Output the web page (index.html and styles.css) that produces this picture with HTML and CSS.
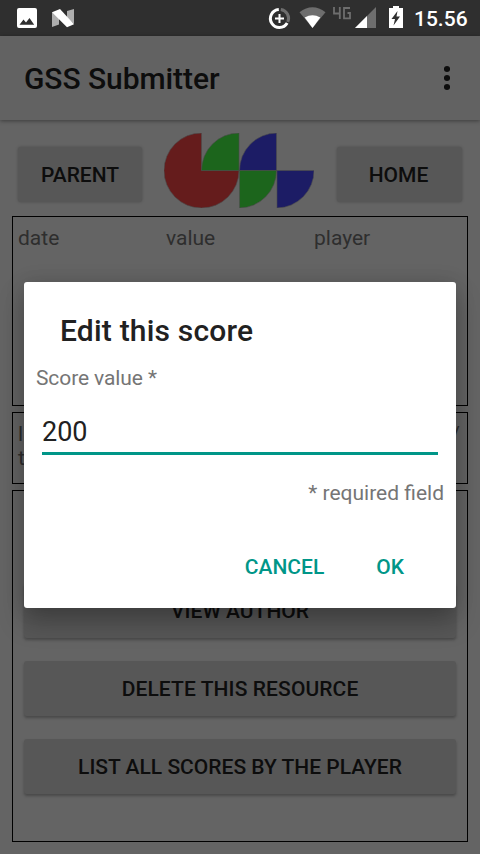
FILE: index.html
```html
<!DOCTYPE html>
<html lang="en">
<head>
<meta charset="utf-8">
<title>GSS Submitter</title>
<link rel="stylesheet" href="styles.css">
</head>
<body>
<div class="screen">
  <header class="status">
    <svg class="status-left" width="60" height="36" viewBox="0 0 60 36">
      <path fill="#fff" fill-rule="evenodd" d="M19 8h16q2 0 2 2v16q0 2-2 2H19q-2 0-2-2V10q0-2 2-2zM19.500 24.700h14.700l-4.700-6.700-3.500 4.500-2.500-3z"/>
    </svg>
    <svg class="nougat" width="24" height="36" viewBox="0 0 24 36">
      <path fill="#aeaeae" d="M0 12l7 5v7.500l-7 2.500zM15 11l7-2v15l-7-6z"/>
      <path fill="#fff" d="M0 12.300L8 9l14 15.300-7 3z"/>
    </svg>
    <svg class="status-right" width="150" height="36" viewBox="0 0 150 36">
      <path fill="none" stroke="#6e6e6e" stroke-width="3" d="M20.800 9.500a9 9 0 0 1 7 12.500"/>
      <path fill="none" stroke="#fff" stroke-width="3" d="M18.800 9.500A9 9 0 1 0 27.200 23"/>
      <path stroke="#fff" stroke-width="2" d="M15 18.500h9M19.500 14v9"/>
      <path fill="#6e6e6e" d="M52.500 28L39.500 12.200q13-10 26 0z"/>
      <path fill="#fff" d="M52.500 28l-7.800-10.500q7.800-4.500 15.600 0z"/>
      <path fill="none" stroke="#6e6e6e" stroke-width="1.800" d="M74 7v6.500h6.500M79.800 7v12M90 8h-6v10.300h6V13h-2.500"/>
      <path fill="#6e6e6e" d="M116 7v21H95z"/>
      <path fill="#fff" d="M107 16v12H95z"/>
      <path fill="#fff" fill-rule="evenodd" d="M133 6h6v2h4v20h-14V8h4zM137.500 11l-6 8h3.500l-1.500 6.500 6.500-9h-3.500z"/>
    </svg>
    <span class="clock">15.56</span>
  </header>
  <div class="appbar">
    <h1>GSS Submitter</h1>
    <svg width="6" height="26" viewBox="0 0 6 26" fill="#0d0d0d"><circle cx="3" cy="4" r="3.100"/><circle cx="3" cy="13" r="3.100"/><circle cx="3" cy="22" r="3.100"/></svg>
  </div>
  <main class="content">
    <div class="nav">
      <button class="btn small">PARENT</button>
      <svg class="logo" width="150" height="75" viewBox="0 0 150 75">
        <g stroke="#4b4b4b" stroke-width=".6">
        <path fill="#651c1c" d="M37.500 0A37.500 37.500 0 1 0 75 37.500H37.500z"/>
        <path fill="#1c651c" d="M37.500 37.500A37.500 37.500 0 0 1 75 0v37.500z"/>
        <path fill="#1c1c65" d="M75.500 37.500A37.500 37.500 0 0 1 112.500 0v37.500z"/>
        <path fill="#1c651c" d="M112.500 37.500A37.500 37.500 0 0 1 75.500 75V37.500z"/>
        <path fill="#1c1c65" d="M113 37.500h37A37.500 37.500 0 0 1 113 75z"/>
        </g>
      </svg>
      <button class="btn small home">HOME</button>
    </div>
    <section class="panel scores"><span>date</span><span>value</span><span>player</span></section>
    <section class="panel link"><div class="line"><span>l</span><span>/</span></div><div>t</div></section>
    <section class="panel actions">
      <button class="btn">VIEW AUTHOR</button>
      <button class="btn delete">DELETE THIS RESOURCE</button>
      <button class="btn">LIST ALL SCORES BY THE PLAYER</button>
    </section>
  </main>
  <div class="dialog">
    <h2>Edit this score</h2>
    <label class="label" for="score">Score value *</label>
    <input id="score" class="field" value="200">
    <p class="hint">* required field</p>
    <div class="buttons"><button class="flat">CANCEL</button><button class="flat">OK</button></div>
  </div>
</div>
</body>
</html>
```
FILE: styles.css
```css
* { box-sizing: border-box; }
body { margin: 0; font-family: Roboto, "Liberation Sans", sans-serif; }
.screen { position: relative; width: 480px; height: 854px; overflow: hidden; background: #646464; display: flex; flex-direction: column; }
svg { display: block; flex: none; }
h1, h2, p { margin: 0; }
button { font-family: inherit; border: 0; padding: 0; }

.status { height: 36px; flex: none; display: flex; background: #2f2f2f; }
.status-left { margin-right: -8px; }
.status-right { margin-left: 184px; }
.clock { margin-left: 4px; font-size: 21px; font-weight: 500; line-height: 38px; color: #fff; white-space: nowrap; }

.appbar { height: 84px; flex: none; display: flex; align-items: center; justify-content: space-between; padding: 0 30px 0 24px; background: #626262; box-shadow: 0 1px 4px rgba(0, 0, 0, .4); }
h1 { padding-top: 2px; font-size: 30px; font-weight: 500; color: #0d0d0d; line-height: 36px; letter-spacing: -.07px; }

.content { flex: 1; display: flex; flex-direction: column; padding: 0 12px 12px; }
.nav { height: 96px; flex: none; display: flex; align-items: flex-start; padding: 13px 6px 0 6px; }
.logo { margin: 0 23px 0 22px; }
.btn { height: 55px; flex: none; border-radius: 3px; background: #575757; color: #0d0d0d; font-size: 21px; font-weight: 500; box-shadow: 0 2px 3px rgba(0, 0, 0, .28); }
.small { width: 124px; margin-top: 14px; box-shadow: 0 0 3px rgba(0, 0, 0, .25); }
.home { width: 125px; padding-right: 2px; }
.delete { letter-spacing: .1px; }

.panel { border: 1px solid #000; color: #2e2e2e; font-size: 21px; line-height: 25px; }
.scores { height: 190px; display: grid; grid-template-columns: repeat(3, 148px); padding: 9px 5px; margin-bottom: 6px; align-content: start; }
.link { height: 72px; padding: 9px 7px 5px 5px; margin-bottom: 6px; line-height: 24px; }
.line { display: flex; justify-content: space-between; }
.actions { flex: 1; display: flex; flex-direction: column; gap: 23px; padding: 92px 11px 0; }

.dialog { position: absolute; left: 24px; top: 282px; width: 432px; height: 326px; border-radius: 3px; background: #fff; display: flex; flex-direction: column; padding: 31px 12px 0; box-shadow: 0 14px 26px rgba(0, 0, 0, .25), 0 0 20px rgba(0, 0, 0, .12); }
h2 { padding-left: 24px; font-size: 30px; line-height: 36px; font-weight: 500; color: #212121; letter-spacing: .2px; }
.label { margin-top: 17px; font-size: 21px; line-height: 25px; color: #757575; letter-spacing: -.1px; }
.field { margin: 23px 6px 0; height: 41px; padding: 1px 0 3px; border: 0; border-bottom: 3px solid #009688; font: 27px/34px Roboto, sans-serif; color: #212121; outline: 0; border-radius: 0; background: none; width: 396px; }
.hint { margin-top: 26px; text-align: right; font-size: 21px; line-height: 25px; color: #757575; }
.buttons { display: flex; justify-content: flex-end; gap: 52px; padding: 49px 40px 0 0; }
.flat { background: none; color: #009688; font-size: 21px; line-height: 25px; font-weight: 500; }
```
